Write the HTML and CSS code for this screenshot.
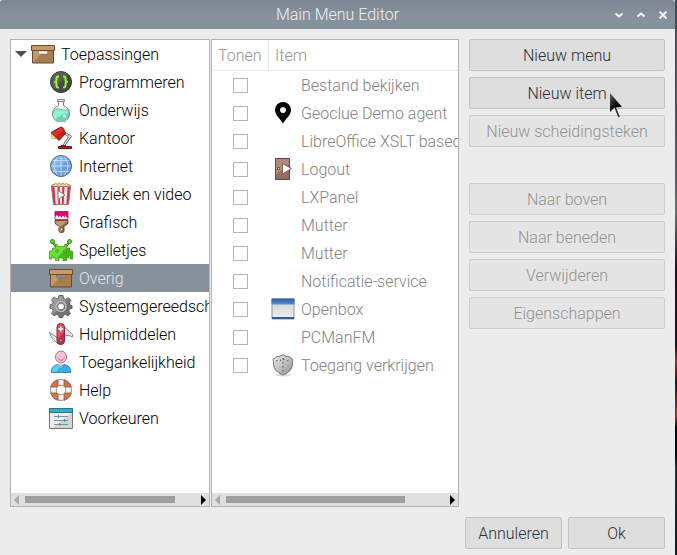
FILE: index.html
```html
<!DOCTYPE html>
<html lang="nl">
<head>
<meta charset="utf-8">
<title>Main Menu Editor</title>
<link rel="stylesheet" href="styles.css">
</head>
<body>
<svg class="sprite" aria-hidden="true">
  <defs>
    <linearGradient id="g-metal" x1="0" y1="0" x2="1" y2="1"><stop offset="0" stop-color="#a8a8a8"/><stop offset=".5" stop-color="#929292"/><stop offset=".5" stop-color="#777"/><stop offset="1" stop-color="#6c6c6c"/></linearGradient>
    <linearGradient id="g-win" x1="0" y1="0" x2="0" y2="1"><stop offset="0" stop-color="#d2d2d2"/><stop offset="1" stop-color="#efefef"/></linearGradient>
    <linearGradient id="g-bar" x1="0" y1="0" x2="0" y2="1"><stop offset="0" stop-color="#2b5ba5"/><stop offset="1" stop-color="#5a8bcc"/></linearGradient>
    <linearGradient id="g-shield" x1="0" y1="0" x2="1" y2="1"><stop offset="0" stop-color="#f4f4f2"/><stop offset="1" stop-color="#8c8d89"/></linearGradient>
    <linearGradient id="g-cursor" x1="0" y1="0" x2="1" y2="1"><stop offset="0" stop-color="#666"/><stop offset=".6" stop-color="#000"/></linearGradient>
  </defs>
  <symbol id="box" viewBox="0 0 24 24">
    <path d="M1.500 8.500h21v12.500h-21z" fill="#c39a63"/>
    <path d="M14 8.500h8.500V21H1.500z" fill="#a67f51"/>
    <path d="M1.500 8.500h21V21h-21z" fill="none" stroke="#6b4b30"/>
    <path d="M.5 3.500h23v5H.5z" fill="#c79b63" stroke="#6b4b30"/>
    <path class="slot" d="M7.500 9h9v1.500q0 1.500-1.500 1.500H9q-1.500 0-1.500-1.500z" stroke="#7d5c3c" stroke-width=".5"/>
  </symbol>
  <symbol id="code" viewBox="0 0 24 24">
    <circle cx="12" cy="12" r="10.500" fill="#5c5c5c"/><path d="M19.500 4.500A10.500 10.500 0 0 1 4.500 19.500z" fill="#484848"/>
    <circle cx="12" cy="12" r="10.500" fill="none" stroke="#353535"/>
    <path d="M10 6.500H9Q7.500 6.500 7.500 8.200v2Q7.500 12 5.200 12 7.500 12 7.500 13.800v2q0 1.700 1.500 1.700h1M14 6.500h1Q16.500 6.500 16.500 8.200v2q0 1.800 2.300 1.800Q16.500 12 16.500 13.800v2q0 1.700-1.500 1.700h-1" fill="none" stroke="#8cff1e" stroke-width="2"/>
  </symbol>
  <symbol id="flask" viewBox="0 0 24 24">
    <path d="M9.500 2.500v5.200a8.500 8.500 0 1 0 5 0V2.500z" fill="#fafafa"/>
    <path d="M3.700 13Q8 9.500 12 11.500t8-.5A8.500 8.500 0 1 1 3.700 13" fill="#8cf3d8"/>
    <path d="M20 12.500 6 21.200A8.500 8.500 0 0 0 20 12.500" fill="#68d2b5"/>
    <path d="M9.500 2.500v5.200a8.500 8.500 0 1 0 5 0V2.500M8.500 1.500h7v2h-7z" fill="none" stroke="#858585"/>
    <path d="M4 13Q8 9.500 12 11.500t8-.5" fill="none" stroke="#55aa97" stroke-width=".8"/>
    <circle cx="15.500" cy="18" r="1.700" fill="#c7f7e9"/><circle cx="17.500" cy="14.500" r="1" fill="#d7fff4"/>
  </symbol>
  <symbol id="lamp" viewBox="0 0 24 24">
    <circle cx="5" cy="10" r="2.800" fill="#ffe65c" stroke="#aaa"/>
    <path d="m15 6.500 6 4-6.500 9.500" fill="none" stroke="#555" stroke-width="2.600"/><path d="m15 6.500 6 4-6.500 9.500" fill="none" stroke="#f2f2f2" stroke-width="1.200"/>
    <path d="M2 6.500 11 1.500Q14.500.5 15 4l1.500 3.500L10 14.500z" fill="#dd302b" stroke="#7e1918"/>
    <path d="M9.800 13.800 6.500 10.500 14.700 4l1.300 3.500z" fill="#b82322"/>
    <circle cx="20.500" cy="10.500" r="1.600" fill="#eee" stroke="#888"/>
    <path d="M9.500 20.500h13v2h-13z" fill="#c42021" stroke="#671819"/><path d="M12 19h5v1.500h-5z" fill="#8a1b1b"/>
  </symbol>
  <symbol id="globe" viewBox="0 0 24 24">
    <circle cx="12" cy="12" r="10.500" fill="#82b3ef"/><path d="M19.500 4.500A10.500 10.500 0 0 1 4.500 19.500z" fill="#6c9fda"/>
    <path d="M12 2v20M2 12h20M3.500 6.500h17M3.500 17.500h17M9 2Q1 12 9 22M15 2q8 10 0 20" fill="none" stroke="#c8ddf5" stroke-width=".9"/>
    <circle cx="12" cy="12" r="10.500" fill="none" stroke="#456998"/>
  </symbol>
  <symbol id="popcorn" viewBox="0 0 24 24">
    <path d="M2.500 5.500Q2 2 5 2.500q1.500-2 3.500-.2 2-1.800 3.500 0 2-1.800 3.500 0Q18 .8 19 2.500q3-.5 2.500 3z" fill="#f3d38a" stroke="#b08a51"/>
    <path d="M2.500 4.500h19l-2 18h-15z" fill="#f4eeee"/>
    <path d="M2.500 4.500h3l1.200 18H4.500zM8.500 4.500h2.200l.4 18H9.300zM13.300 4.500h2.200l-.8 18h-1.800zM18.500 4.500h3l-2 18h-2.200z" fill="#d93145"/>
    <path d="M2.500 4.500h19l-2 18h-15z" fill="none" stroke="#a67176"/>
    <path d="m9 8.500 7 4.500-7 4.500z" fill="#fff" stroke="#777"/>
  </symbol>
  <symbol id="brush" viewBox="0 0 24 24">
    <path d="M6 10.500h13v2q0 2-3 3l-1 1v4.500q0 1.500-2.500 1.500T10 21v-4.500l-1-1q-3-1-3-3z" fill="#c79a61"/>
    <path d="M19 10.500v2q0 2-3 3l-1 1v4.500q0 1.500-2.500 1.500L11 17z" fill="#8e6945"/>
    <path d="M6 10.500h13v2q0 2-3 3l-1 1v4.500q0 1.500-2.500 1.500T10 21v-4.500l-1-1q-3-1-3-3z" fill="none" stroke="#654a37"/>
    <path d="M6 1.500h13v8H6z" fill="#f3f3f3"/><path d="M6 1.500h13V7l-1 1-1.500-3-1 2.500-1.500-2-1.500 2.500-1.500-2.500L9.500 7 8 5 6 7z" fill="#e6007b"/>
    <path d="M6 1.500h13v8H6z" fill="none" stroke="#842059" stroke-width=".8"/><circle cx="12.500" cy="19.500" r="1.300" fill="#eee" stroke="#555" stroke-width=".7"/>
  </symbol>
  <symbol id="invader" viewBox="0 0 24 24">
    <path d="m3.500 4 4 5m13-5-4 5" stroke="#407e23" stroke-width="2.400"/><path d="m3.500 4 4 5m13-5-4 5" stroke="#62dd25"/>
    <path d="M6.500 6.500h2v2h7v-2h2V10h3v3h3v8H21v-3h-1.500v2h-2v2.500H14V20h-4v2.500H6.500V20h-2v-2H3v3H.5v-8h3v-3h3z" fill="#66e526"/>
    <path d="M18 10h2.500v3h3v8H21v-3h-1.500v2h-2v2.500H14V20H8z" fill="#48b817"/>
    <path d="M6.500 6.500h2v2h7v-2h2V10h3v3h3v8H21v-3h-1.500v2h-2v2.500H14V20h-4v2.500H6.500V20h-2v-2H3v3H.5v-8h3v-3h3z" fill="none" stroke="#3c8b20" stroke-width=".7"/>
    <circle cx="3.500" cy="3.500" r="2" fill="#62dd25" stroke="#407e23"/><circle cx="20.500" cy="3.500" r="2" fill="#62dd25" stroke="#407e23"/>
    <path d="M7 12h2v2H7zM15 12h2v2h-2z" fill="#fff" stroke="#444" stroke-width=".7"/>
  </symbol>
  <symbol id="gear" viewBox="0 0 24 24">
    <path fill-rule="evenodd" d="M10 1.500h4l.6 3 2.200.9 2.500-1.800 2.600 2.600L20.100 8.800l.9 2.200 2 .5v3l-2.500.5-.8 1.900 1.700 2.500-2.600 2.500-2.500-1.600-2 .8-.6 2.400h-3.500L9.600 21l-2-.8-2.500 1.700-2.500-2.600 1.600-2.500-.8-2-2.400-.4v-3.500L3.500 10l.8-1.900-1.700-2.400L5.200 3.200l2.300 1.600 1.900-.7zM12 9a3.500 3.500 0 1 0 .01 0z" fill="url(#g-metal)" stroke="#606060"/>
    <circle cx="12" cy="12.500" r="5" fill="none" stroke="#c5c5c5" stroke-width="1.200"/>
  </symbol>
  <symbol id="knife" viewBox="0 0 24 24">
    <path d="M8.500 21.500Q2 17 .5 10.500L9 16zM15 4.500l8.500 8v2.500l-2-1L15 13z" fill="#ececec" stroke="#858585"/>
    <rect x="8" y="1.500" width="7.500" height="21" rx="3.700" fill="#ec4a64"/><path d="M15.500 9v10q0 3.500-3.800 3.500T8 18.500z" fill="#c72d48"/>
    <rect x="8" y="1.500" width="7.500" height="21" rx="3.700" fill="none" stroke="#8c2739"/>
    <path d="M11.700 4.500v5M9.200 7h5" stroke="#fff" stroke-width="1.500"/><circle cx="11.700" cy="18.500" r="1.300" fill="#bbb" stroke="#555"/>
  </symbol>
  <symbol id="person" viewBox="0 0 24 24">
    <path d="M2.500 22.500v-2q.5-5 6.500-6h6q6 1 6.500 6v2z" fill="#4bd7ff"/><path d="M13 14.500h2q6 1 6.500 6v2H7z" fill="#35aef5"/>
    <path d="M2.500 22.500v-2q.5-5 6.500-6h6q6 1 6.500 6v2z" fill="none" stroke="#3b84a8"/>
    <ellipse cx="12" cy="7" rx="5.500" ry="6" fill="#ffc0d5" stroke="#a77689"/><path d="M8.500 8q3.500 4.500 7 0" fill="none" stroke="#b26b85"/>
    <path d="m9 14 3 2.500 3-2.500" fill="#ffc0d5"/><circle cx="12" cy="17.500" r="1" fill="#eee" stroke="#555" stroke-width=".5"/><circle cx="12" cy="20.500" r="1" fill="#eee" stroke="#555" stroke-width=".5"/>
  </symbol>
  <symbol id="buoy" viewBox="0 0 24 24">
    <circle cx="12" cy="12" r="7.700" fill="none" stroke="#f5f5f5" stroke-width="5.800"/>
    <path d="M1.700 9A10.500 10.500 0 0 1 9 1.700V8L8 9zM15 1.700A10.500 10.500 0 0 1 22.300 9H16l-1-1zM22.300 15A10.500 10.500 0 0 1 15 22.300V16l1-1zM9 22.300A10.500 10.500 0 0 1 1.700 15H8l1 1z" fill="#dd743b" stroke="#984d2b" stroke-width=".8"/>
    <circle cx="12" cy="12" r="10.500" fill="none" stroke="#777" stroke-width=".8"/><circle cx="12" cy="12" r="4.800" fill="#fff" stroke="#777" stroke-width=".8"/>
  </symbol>
  <symbol id="prefs" viewBox="0 0 24 24">
    <path d="M.5 2.500h23v20H.5z" fill="#ececec"/><path d="M23.500 6v16.500H3z" fill="#d4d4d4"/>
    <path d="M.5 2.500h23v20H.5z" fill="none" stroke="#777"/><path d="M.5 2.500h23v4H.5z" fill="#35acc3" stroke="#27788c"/>
    <path d="M5 10.500h14M5 14.500h14M5 18.500h14" stroke="#777" stroke-width=".8"/><path d="M9.500 9v3M15.500 13v3M11 17v3" stroke="#24aac7"/>
  </symbol>
  <symbol id="pin" viewBox="0 0 24 24"><path fill-rule="evenodd" d="M12 1a8 8 0 0 0-8 8c0 5 5 8.500 8 13.500C15 17.500 20 14 20 9a8 8 0 0 0-8-8m0 5a3 3 0 1 1-.01 0z"/></symbol>
  <symbol id="door" viewBox="0 0 24 24">
    <path d="M4.500 1.500h14v21h-14z" fill="#b28a7e"/><path d="M18.500 7v15.500h-14V18z" fill="#966d62"/><path d="M4.500 1.500h14v21h-14z" fill="none" stroke="#63443b"/>
    <path d="M6.500 10.500h2v2h-2z" fill="#ffea65" stroke="#665b37"/><path d="m11.500 6.500 9 5-9 5.500z" fill="#fff" stroke="#6f6260"/>
  </symbol>
  <symbol id="window" viewBox="0 0 24 24">
    <path d="M1 2h22v20H1z" fill="url(#g-win)" stroke="#8a97a8"/><path d="M.5 1.500h23v6H.5z" fill="url(#g-bar)"/><path d="M1 20h22v2H1z" fill="#315d91"/><path d="M1 22.500h22" stroke="#c4ccd5"/>
  </symbol>
  <symbol id="shield" viewBox="0 0 24 24">
    <ellipse cx="12" cy="22" rx="8" ry="1.500" fill="#ddd"/>
    <path d="M12 1.500Q15 4 18 3.500l4 3q-1 2-.5 5-.5 7-9.500 10.500-9-3.500-9.500-10.500.5-3-.5-5l4-3Q9 4 12 1.500z" fill="url(#g-shield)" stroke="#777"/>
    <path d="M12 5v15M5 7.500q4 1 7-2 3 3 7 2" stroke="#777" stroke-width="1.500" stroke-dasharray="1.500 2.500" fill="none"/>
  </symbol>
</svg>

<div class="window">
  <header class="titlebar">
    <h1>Main Menu Editor</h1>
    <div class="controls">
      <button type="button" aria-label="Minimaliseren"><svg viewBox="0 0 10 10"><path d="m1.500 3.500 3.500 3 3.500-3"/></svg></button>
      <button type="button" aria-label="Maximaliseren"><svg viewBox="0 0 10 10"><path d="m1.500 6.500 3.500-3 3.500 3"/></svg></button>
      <button type="button" aria-label="Sluiten"><svg viewBox="0 0 10 10"><path d="m1.500 1.500 7 7m0-7-7 7"/></svg></button>
    </div>
  </header>

  <main class="content">
    <section class="pane tree-pane">
      <div class="view">
        <ul class="tree">
          <li>
            <div class="row root"><span class="expander"></span><svg class="icon"><use href="#box"/></svg>Toepassingen</div>
            <ul class="branch">
              <li class="row"><svg class="icon"><use href="#code"/></svg>Programmeren</li>
              <li class="row"><svg class="icon"><use href="#flask"/></svg>Onderwijs</li>
              <li class="row"><svg class="icon"><use href="#lamp"/></svg>Kantoor</li>
              <li class="row"><svg class="icon"><use href="#globe"/></svg>Internet</li>
              <li class="row"><svg class="icon"><use href="#popcorn"/></svg>Muziek en video</li>
              <li class="row"><svg class="icon"><use href="#brush"/></svg>Grafisch</li>
              <li class="row"><svg class="icon"><use href="#invader"/></svg>Spelletjes</li>
              <li class="row selected"><svg class="icon"><use href="#box"/></svg>Overig</li>
              <li class="row"><svg class="icon"><use href="#gear"/></svg>Systeemgereedschap</li>
              <li class="row"><svg class="icon"><use href="#knife"/></svg>Hulpmiddelen</li>
              <li class="row"><svg class="icon"><use href="#person"/></svg>Toegankelijkheid</li>
              <li class="row"><svg class="icon"><use href="#buoy"/></svg>Help</li>
              <li class="row"><svg class="icon"><use href="#prefs"/></svg>Voorkeuren</li>
            </ul>
          </li>
        </ul>
      </div>
      <div class="scrollbar"><span class="arrow left"></span><span class="track"><span class="thumb tree-thumb"></span></span><span class="arrow right"></span></div>
    </section>
    <div class="splitter"></div>
    <section class="pane item-pane">
      <div class="view">
        <table class="items">
          <thead><tr><th class="show">Tonen</th><th>Item</th></tr></thead>
          <tbody>
            <tr><td><input type="checkbox" id="i1" disabled></td><td><label class="item" for="i1"><span class="icon"></span>Bestand bekijken</label></td></tr>
            <tr><td><input type="checkbox" id="i2" disabled></td><td><label class="item" for="i2"><svg class="icon"><use href="#pin"/></svg>Geoclue Demo agent</label></td></tr>
            <tr><td><input type="checkbox" id="i3" disabled></td><td><label class="item" for="i3"><span class="icon"></span>LibreOffice XSLT based</label></td></tr>
            <tr><td><input type="checkbox" id="i4" disabled></td><td><label class="item" for="i4"><svg class="icon"><use href="#door"/></svg>Logout</label></td></tr>
            <tr><td><input type="checkbox" id="i5" disabled></td><td><label class="item" for="i5"><span class="icon"></span>LXPanel</label></td></tr>
            <tr><td><input type="checkbox" id="i6" disabled></td><td><label class="item" for="i6"><span class="icon"></span>Mutter</label></td></tr>
            <tr><td><input type="checkbox" id="i7" disabled></td><td><label class="item" for="i7"><span class="icon"></span>Mutter</label></td></tr>
            <tr><td><input type="checkbox" id="i8" disabled></td><td><label class="item" for="i8"><span class="icon"></span>Notificatie-service</label></td></tr>
            <tr><td><input type="checkbox" id="i9" disabled></td><td><label class="item" for="i9"><svg class="icon"><use href="#window"/></svg>Openbox</label></td></tr>
            <tr><td><input type="checkbox" id="i10" disabled></td><td><label class="item" for="i10"><span class="icon"></span>PCManFM</label></td></tr>
            <tr><td><input type="checkbox" id="i11" disabled></td><td><label class="item" for="i11"><svg class="icon"><use href="#shield"/></svg>Toegang verkrijgen</label></td></tr>
          </tbody>
        </table>
      </div>
      <div class="scrollbar"><span class="arrow left"></span><span class="track"><span class="thumb item-thumb"></span></span><span class="arrow right"></span></div>
    </section>
    <aside class="actions">
      <div class="group">
        <button class="btn" type="button">Nieuw menu</button>
        <button class="btn hovered" type="button">Nieuw item
          <svg class="cursor" viewBox="0 0 14 28" aria-hidden="true"><path d="M1 1v19l4.500-4.500 7.500-.5z" fill="url(#g-cursor)"/><path d="m6 15 4 10" stroke="#222" stroke-width="1.500"/></svg>
        </button>
        <button class="btn" type="button" disabled>Nieuw scheidingsteken</button>
      </div>
      <div class="group">
        <button class="btn" type="button" disabled>Naar boven</button>
        <button class="btn" type="button" disabled>Naar beneden</button>
        <button class="btn" type="button" disabled>Verwijderen</button>
        <button class="btn" type="button" disabled>Eigenschappen</button>
      </div>
    </aside>
  </main>

  <footer class="footer">
    <button class="btn" type="button">Annuleren</button>
    <button class="btn" type="button">Ok</button>
  </footer>
</div>
</body>
</html>
```
FILE: styles.css
```css
* { box-sizing: border-box; }

body {
  margin: 0;
  padding-right: 2px;
  background: linear-gradient(#3c4a54 0, #4b5b64 30%, #69736f 38%, #20151c 48%, #1c1119 62%, #a42e12 65%, #321319 69%, #a63712 75%, #05060c 77%, #05060c 82%, #292b30 84%, #191b20 100%);
  font: 300 16px/21px Roboto, sans-serif;
  color: #000;
}

ul { margin: 0; padding: 0; list-style: none; }
button, input { font: inherit; margin: 0; }
svg { display: block; }
.sprite { position: absolute; width: 0; height: 0; }

.window {
  display: flex;
  flex-direction: column;
  min-height: 100vh;
  background: #ececec;
}

.titlebar {
  display: grid;
  grid-template-columns: 1fr auto 1fr;
  align-items: center;
  height: 29px;
  background: linear-gradient(#7a858f, #87919b 50%);
  border-radius: 3px 3px 0 0;
  color: #eef0f2;
}
.titlebar h1 { grid-column: 2; margin: 0; font-size: 16px; font-weight: 300; }
.controls { display: flex; gap: 12px; justify-self: end; padding-right: 7px; }
.controls button { padding: 0; border: 0; background: none; }
.controls svg { width: 10px; height: 10px; fill: none; stroke: #f3f4f5; stroke-width: 2; }

.content { flex: 1; display: flex; padding: 10px 10px 0; }

.pane {
  display: flex;
  flex-direction: column;
  min-width: 0;
  border: 1px solid #b3b3b3;
  background: #fff;
}
.tree-pane { flex: 0 0 200px; }
.item-pane { flex: 1 1 0; }
.view { flex: 1; overflow: hidden; }
.splitter { width: 1px; background: #ececec; }

.row { display: flex; align-items: center; gap: 6px; height: 28px; padding-left: 38px; white-space: nowrap; }
.row.root { padding-left: 4px; gap: 0; }
.root .icon { margin-right: 6px; }
.row.selected { background: #87919b; color: #e2e5e8; }
.icon { flex: none; width: 24px; height: 24px; --slot: #fff; }
.selected .icon { --slot: #87919b; }
.slot { fill: var(--slot); }

.expander {
  margin-right: 4px;
  border: 6px solid transparent;
  border-top-color: #505050;
  border-bottom: 0;
}

.items { width: 100%; border-collapse: separate; border-spacing: 0; table-layout: fixed; color: #828282; }
.items th { height: 31px; padding: 0 6px; border-bottom: 1px solid #e7e7e7; font-weight: 300; text-align: left; color: #939393; }
.items .show { width: 57px; border-right: 1px solid #e7e7e7; }
.items td { height: 28px; padding: 0; }
.items input {
  display: block;
  appearance: none;
  width: 15px;
  height: 15px;
  margin: 0 auto;
  border: 1px solid #b5b5b5;
  background: #fff;
}
.item { display: flex; align-items: center; gap: 6px; height: 28px; padding-left: 2px; white-space: nowrap; }

.scrollbar { display: flex; align-items: center; height: 13px; padding: 0 3px; background: #dfdfdf; }
.track { flex: 1; margin: 0 6px; }
.thumb { display: block; height: 7px; background: #9e9e9e; }
.tree-thumb { width: 88%; }
.item-thumb { width: 82%; }
.arrow { border: 5px solid transparent; }
.arrow.left { border-left: 0; border-right-color: #a8a8a8; }
.arrow.right { border-right: 0; border-left-color: #000; }

.actions { flex: 0 0 196px; display: flex; flex-direction: column; gap: 36px; margin-left: 10px; }
.group { display: grid; gap: 6px; }

.btn {
  height: 32px;
  padding: 0 12px;
  border: 1px solid #c3c3c3;
  border-radius: 2px;
  background: #dedede;
  color: #2b3038;
}
.btn:disabled { border-color: #cdcdcd; background: #e5e5e5; color: #929292; }
.hovered { position: relative; }
.cursor { position: absolute; right: 41px; top: 14px; width: 14px; height: 28px; z-index: 1; }

.footer { display: flex; justify-content: flex-end; gap: 6px; padding: 10px 10px 6px; }
.footer .btn { width: 97px; }
```
